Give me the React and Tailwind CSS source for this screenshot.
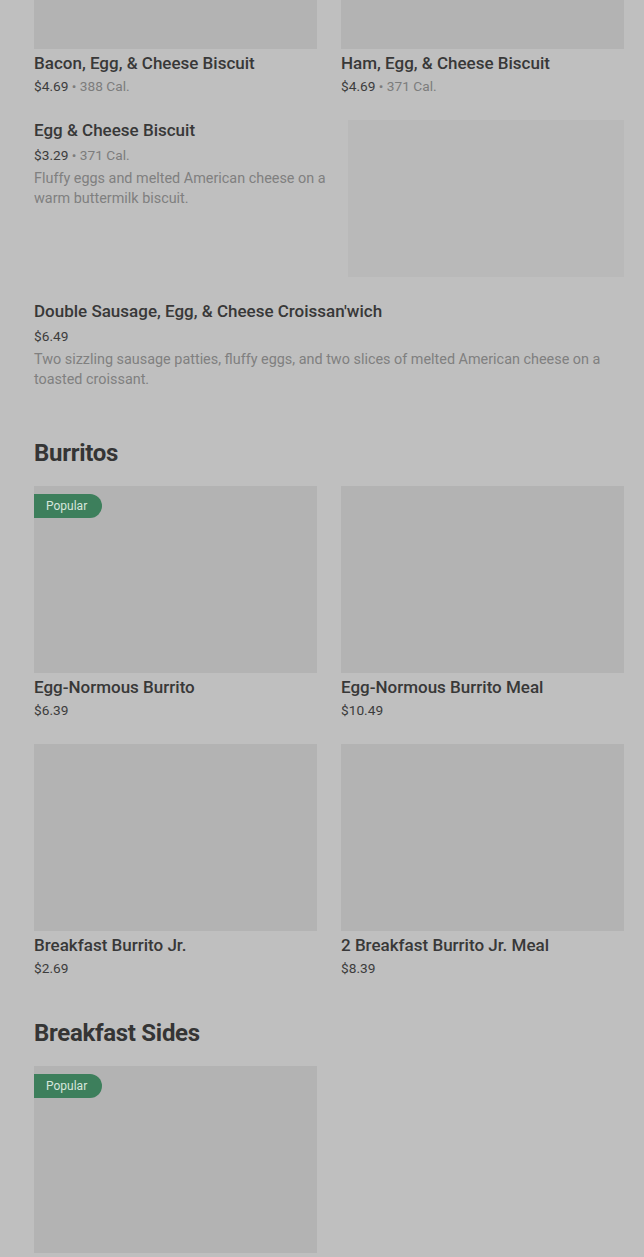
import React from "react";

const font = { fontFamily: "Roboto, 'Liberation Sans', sans-serif" };

function GridCard({ title, price, cal, popular }) {
  return (
    <div className="flex flex-col">
      <div className="relative h-[187px] bg-[#b3b3b3]">
        {popular && (
          <span className="absolute left-0 top-2 h-6 w-[68px] rounded-r-full bg-[#3d7f5c] pl-3 text-[12px] leading-6 text-[#d6e6dc]">
            Popular
          </span>
        )}
      </div>
      <div className="text-[17px] font-medium leading-[28px] text-[#383838]">{title}</div>
      <div className="text-[13.7px] leading-[18px] text-[#3c3c3c]">
        {price}
        {cal && <span className="text-[#7c7c7c]"> • {cal}</span>}
      </div>
    </div>
  );
}

function ListItem({ title, price, cal, desc, image }) {
  return (
    <div className="flex gap-[18px]">
      <div className="flex-1 min-w-0">
        <div className="text-[17px] font-medium leading-5 text-[#383838]">{title}</div>
        <div className="mt-[5px] text-[13.7px] leading-5 text-[#3c3c3c]">
          {price}
          {cal && <span className="text-[#7c7c7c]"> • {cal}</span>}
        </div>
        <div className="mt-1 text-[14.4px] leading-5 text-[#808080]">{desc}</div>
      </div>
      {image && <div className="h-[157px] w-[276px] shrink-0 bg-[#b9b9b9]" />}
    </div>
  );
}

export default function App() {
  return (
    <div style={font} className="min-h-[1257px] overflow-hidden bg-[#bfbfbf] pl-[34px] pr-5">
      <div className="mt-[-138px] grid grid-cols-2 gap-x-6">
        <GridCard title="Bacon, Egg, & Cheese Biscuit" price="$4.69" cal="388 Cal." />
        <GridCard title="Ham, Egg, & Cheese Biscuit" price="$4.69" cal="371 Cal." />
      </div>
      <div className="mt-[25px] flex flex-col gap-6">
        <ListItem
          title="Egg & Cheese Biscuit"
          price="$3.29"
          cal="371 Cal."
          desc="Fluffy eggs and melted American cheese on a warm buttermilk biscuit."
          image
        />
        <ListItem
          title="Double Sausage, Egg, & Cheese Croissan'wich"
          price="$6.49"
          desc="Two sizzling sausage patties, fluffy eggs, and two slices of melted American cheese on a toasted croissant."
        />
      </div>

      <h2 className="mt-[47px] text-[24px] font-bold leading-8 tracking-[-0.3px] text-[#353535]">Burritos</h2>
      <div className="mt-[17px] grid grid-cols-2 gap-x-6 gap-y-[25px]">
        <GridCard title="Egg-Normous Burrito" price="$6.39" popular />
        <GridCard title="Egg-Normous Burrito Meal" price="$10.49" />
        <GridCard title="Breakfast Burrito Jr." price="$2.69" />
        <GridCard title="2 Breakfast Burrito Jr. Meal" price="$8.39" />
      </div>

      <h2 className="mt-10 text-[24px] font-bold leading-8 tracking-[-0.3px] text-[#353535]">Breakfast Sides</h2>
      <div className="mt-[17px] grid grid-cols-2 gap-x-6">
        <GridCard title="Hash Browns" price="$2.19" popular />
      </div>
    </div>
  );
}
